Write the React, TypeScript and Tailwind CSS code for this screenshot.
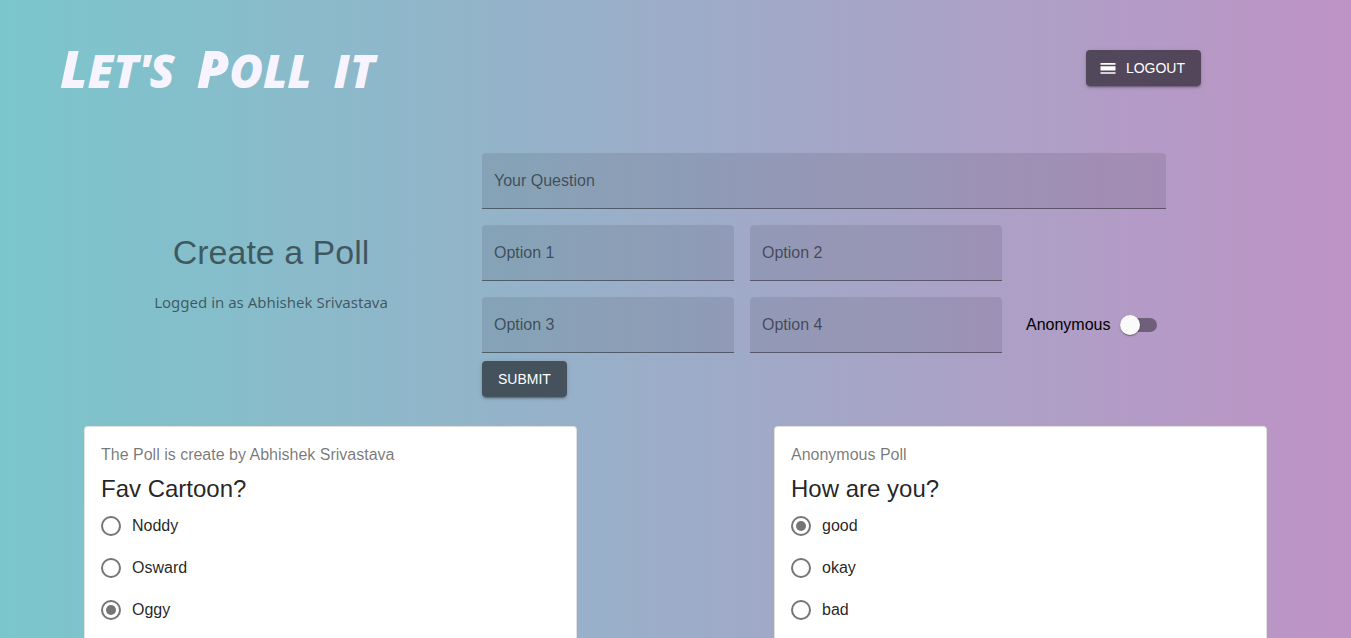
import { useState } from "react";

type Poll = { id: string; author: string; question: string; options: string[]; selected: string };

const polls: Poll[] = [
  {
    id: "cartoon",
    author: "The Poll is create by Abhishek Srivastava",
    question: "Fav Cartoon?",
    options: ["Noddy", "Osward", "Oggy"],
    selected: "Oggy",
  },
  {
    id: "mood",
    author: "Anonymous Poll",
    question: "How are you?",
    options: ["good", "okay", "bad"],
    selected: "good",
  },
];

const buttonClass =
  "flex h-9 items-center rounded bg-black/54 text-sm text-white shadow-[0_3px_1px_-2px_rgba(0,0,0,0.2),0_2px_2px_0_rgba(0,0,0,0.14),0_1px_5px_0_rgba(0,0,0,0.12)] hover:bg-black/64";

function Field({ label, wide = false }: { label: string; wide?: boolean }) {
  return (
    <input
      type="text"
      aria-label={label}
      placeholder={label}
      className={
        "h-14 w-full min-w-0 rounded-t border-b border-black/42 bg-black/9 px-3 text-base text-black/87 outline-none placeholder:text-black/54 " +
        (wide ? "col-span-3" : "")
      }
    />
  );
}

function PollCard({ poll }: { poll: Poll }) {
  const [choice, setChoice] = useState(poll.selected);
  return (
    <article className="rounded-t border border-b-0 border-black/12 bg-white p-4">
      <p className="text-base text-black/54">{poll.author}</p>
      <h2 id={poll.id + "-question"} className="mt-1.5 text-2xl text-black/87">
        {poll.question}
      </h2>
      <div role="radiogroup" aria-labelledby={poll.id + "-question"}>
        {poll.options.map((option) => (
          <label key={option} className="flex h-[42px] items-center gap-[11px] text-base text-black/87">
            <input
              type="radio"
              name={poll.id}
              checked={choice === option}
              onChange={() => setChoice(option)}
              className="grid size-5 appearance-none place-items-center rounded-full border-2 border-[#757575] before:size-[10px] before:rounded-full checked:before:bg-[#757575]"
            />
            {option}
          </label>
        ))}
      </div>
    </article>
  );
}

export default function App() {
  return (
    <div className="flex min-h-screen flex-col bg-linear-to-r/srgb from-[#7bc6cc] to-[#be93c5] font-['Liberation_Sans',Arial,sans-serif]">
      <header className="flex items-start justify-between pt-8 pr-[150px] pl-[60px]">
        <h1 className="flex items-baseline gap-[22px] font-['Permanent_Marker','Open_Sans',sans-serif] text-[46px] leading-[72px] font-extrabold text-[#f8f4ff] uppercase italic">
          <span>
            <span className="text-[52px]">L</span>et's
          </span>
          <span>
            <span className="text-[52px]">P</span>oll
          </span>
          <span>it</span>
        </h1>
        <button type="button" className={buttonClass + " mt-[18px] gap-2 pr-4 pl-3"}>
          <svg viewBox="0 0 24 24" className="size-5 fill-current" aria-hidden="true">
            <path d="M3 17h18v2H3zm0-7h18v5H3zm0-4h18v2H3z" />
          </svg>
          LOGOUT
        </button>
      </header>

      <main className="flex flex-1 flex-col">
        <section className="mt-[47px] grid grid-cols-[406fr_684fr] gap-2 pr-[185px] pl-[68px]">
          <div className="flex flex-col items-center pt-[78px] text-black/54">
            <h2 className="text-[34px] leading-[42px]">Create a Poll</h2>
            <p className="mt-4 font-['Noto_Sans',sans-serif] text-[15px] leading-[26px]">Logged in as Abhishek Srivastava</p>
          </div>
          <form onSubmit={(e) => e.preventDefault()}>
            <div className="grid grid-cols-[252fr_252fr_148fr] gap-4">
              <Field label="Your Question" wide />
              <Field label="Option 1" />
              <Field label="Option 2" />
              <span />
              <Field label="Option 3" />
              <Field label="Option 4" />
              <label className="flex items-center gap-[9px] pl-2 text-base text-black">
                Anonymous
                <input
                  type="checkbox"
                  role="switch"
                  className="flex h-[14px] w-[37px] appearance-none items-center rounded-full bg-black/38 before:size-5 before:rounded-full before:bg-[#fafafa] before:shadow-[0_2px_1px_-1px_rgba(0,0,0,0.2),0_1px_1px_0_rgba(0,0,0,0.14),0_1px_3px_0_rgba(0,0,0,0.12)] checked:justify-end"
                />
              </label>
            </div>
            <button type="submit" className={buttonClass + " mt-2 px-4"}>
              SUBMIT
            </button>
          </form>
        </section>

        <section className="mt-[29px] grid flex-1 grid-cols-2 gap-[197px] px-[84px]">
          {polls.map((poll) => (
            <PollCard key={poll.id} poll={poll} />
          ))}
        </section>
      </main>
    </div>
  );
}
